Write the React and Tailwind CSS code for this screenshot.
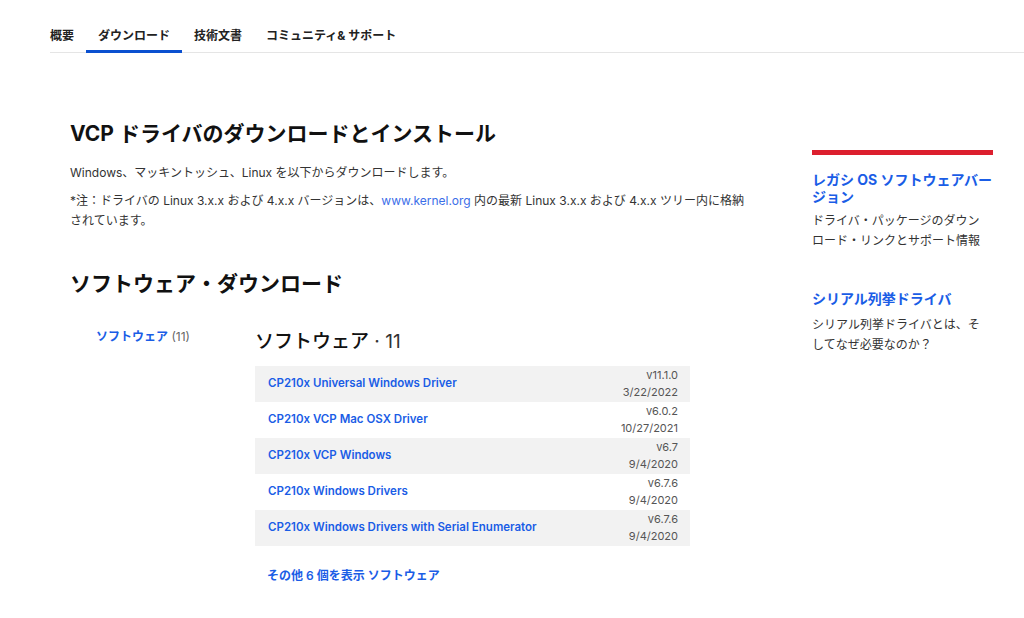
const TABS = ["概要", "ダウンロード", "技術文書", "コミュニティ& サポート"];

const DRIVERS = [
  { name: "CP210x Universal Windows Driver", ver: "v11.1.0", date: "3/22/2022" },
  { name: "CP210x VCP Mac OSX Driver", ver: "v6.0.2", date: "10/27/2021" },
  { name: "CP210x VCP Windows", ver: "v6.7", date: "9/4/2020" },
  { name: "CP210x Windows Drivers", ver: "v6.7.6", date: "9/4/2020" },
  { name: "CP210x Windows Drivers with Serial Enumerator", ver: "v6.7.6", date: "9/4/2020" },
];

/* ── Tab bar ── */
function Tabs() {
  return (
    <div className="ml-[50px] flex border-b border-[#e5e5e5] h-[53px]">
      {TABS.map((t, i) => (
        <div
          key={t}
          className={
            i === 1
              ? "px-3 h-[53px] flex items-end pb-[6px] leading-4 border-b-[3px] border-[#0a50d0] -mb-px text-[12px] font-bold text-[#222]"
              : "px-3 h-[53px] flex items-end pb-[6px] leading-4 border-b-[3px] border-transparent -mb-px text-[12px] font-bold text-[#222]"
          }
          style={i === 0 ? { paddingLeft: 0 } : undefined}
        >
          {t}
        </div>
      ))}
    </div>
  );
}

/* ── Download row ── */
function DriverRow({ d, i }) {
  return (
    <div
      className={
        i % 2 === 0
          ? "h-9 flex items-center justify-between pl-[13px] pr-3 bg-[#f2f2f2]"
          : "h-9 flex items-center justify-between pl-[13px] pr-3 bg-white"
      }
    >
      <a className="text-[11.5px] font-semibold text-[#1a5de6]">{d.name}</a>
      <div className="text-right text-[11px] leading-[17px] text-[#555]">
        <div>{d.ver}</div>
        <div>{d.date}</div>
      </div>
    </div>
  );
}

export default function App() {
  return (
    <div
      className="w-[1024px] h-[618px] bg-white overflow-hidden"
      style={{ fontFamily: "Inter, 'Noto Sans CJK JP', sans-serif" }}
    >
      <Tabs />

      <div className="flex">
        {/* Main column */}
        <div className="w-[742px] ml-[70px] pt-[66px]">
          <h1 className="text-[21px] font-bold text-[#111] leading-[30px]">
            VCP ドライバのダウンロードとインストール
          </h1>
          <p className="mt-[14px] text-[12px] leading-5 text-[#333]">
            Windows、マッキントッシュ、Linux を以下からダウンロードします。
          </p>
          <p className="mt-2 text-[12px] leading-5 text-[#333] w-[684px]">
            *注：ドライバの Linux 3.x.x および 4.x.x バージョンは、
            <a className="text-[#3b6ee8]">www.kernel.org</a>
            {" "}内の最新 Linux 3.x.x および 4.x.x ツリー内に格納されています。
          </p>

          <h2 className="mt-[38px] text-[21px] font-bold text-[#111] leading-[30px]">
            ソフトウェア・ダウンロード
          </h2>

          <div className="flex mt-[24px]">
            <div className="w-[185px] pl-[26px] pt-[5px] text-[12px]">
              <span className="font-semibold text-[#1a5de6]">ソフトウェア</span>
              <span className="text-[#666]"> (11)</span>
            </div>
            <div className="w-[435px]">
              <h3 className="text-[19px] font-medium text-[#111] leading-[28px] pt-[5px]">
                ソフトウェア<span className="font-normal text-[#333]"> · 11</span>
              </h3>
              <div className="mt-[10px]">
                {DRIVERS.map((d, i) => (
                  <DriverRow key={d.name} d={d} i={i} />
                ))}
              </div>
              <a className="block mt-[21px] pl-3 text-[12px] font-semibold text-[#1a5de6]">
                その他 6 個を表示 ソフトウェア
              </a>
            </div>
          </div>
        </div>

        {/* Right sidebar */}
        <div className="w-[181px] pt-[97px]">
          <div className="h-[5px] bg-[#dc1f2e]" />
          <a className="block mt-[16px] text-[14px] font-bold leading-[17px] text-[#1a5de6]">
            レガシ OS ソフトウェアバージョン
          </a>
          <p className="mt-[6px] text-[12px] leading-5 text-[#333] w-[172px]">
            ドライバ・パッケージのダウンロード・リンクとサポート情報
          </p>
          <a className="block mt-[39px] text-[14px] font-bold leading-[17px] text-[#1a5de6]">
            シリアル列挙ドライバ
          </a>
          <p className="mt-[8px] text-[12px] leading-5 text-[#333] w-[172px]">
            シリアル列挙ドライバとは、そしてなぜ必要なのか？
          </p>
        </div>
      </div>
    </div>
  );
}
